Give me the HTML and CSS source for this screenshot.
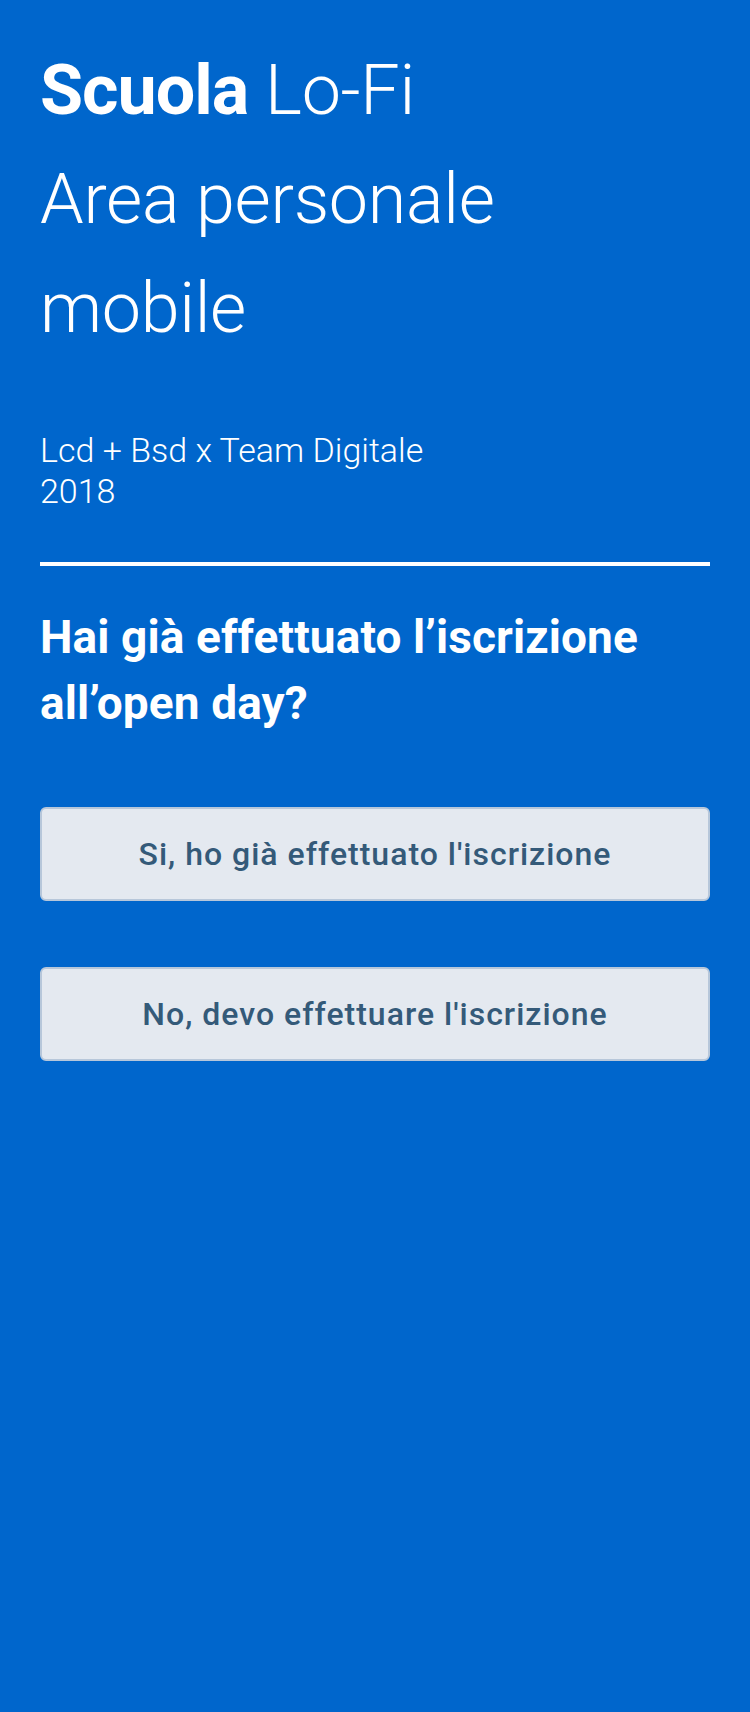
FILE: index.html
```html
<!DOCTYPE html>
<html lang="it">
<head>
<meta charset="utf-8">
<title>Scuola Lo-Fi – Area personale mobile</title>
<link rel="stylesheet" href="styles.css">
</head>
<body>
<main class="page">
  <h1 class="title"><strong class="title-strong">Scuola</strong> Lo-Fi<br>Area personale<br>mobile</h1>
  <p class="credits">Lcd + Bsd x Team Digitale<br>2018</p>
  <hr class="divider">
  <h2 class="question">Hai già effettuato l’iscrizione all’open day?</h2>
  <div class="actions">
    <button class="btn" type="button">Si, ho già effettuato l'iscrizione</button>
    <button class="btn" type="button">No, devo effettuare l'iscrizione</button>
  </div>
</main>
</body>
</html>
```

FILE: styles.css
```css
html, body {
  margin: 0;
  padding: 0;
}

body {
  background: #0066cc;
  color: #ffffff;
  font-family: Roboto, "Noto Sans", "Liberation Sans", sans-serif;
  min-height: 1712px;
}

.page {
  padding: 36px 40px 40px;
  display: flex;
  flex-direction: column;
}

.title {
  margin: 0;
  font-size: 70px;
  line-height: 109px;
  font-weight: 300;
  letter-spacing: -0.3px;
}

.title-strong {
  font-weight: 700;
  letter-spacing: -1px;
}

.credits {
  margin: 67px 0 0;
  font-size: 34px;
  line-height: 41px;
  font-weight: 300;
}

.divider {
  margin: 50px 0 0;
  border: 0;
  height: 4px;
  background: #ffffff;
}

.question {
  margin: 38px 0 0;
  font-size: 46px;
  line-height: 66px;
  font-weight: 700;
  letter-spacing: 0.1px;
  max-width: 620px;
}

.actions {
  margin-top: 71px;
  display: flex;
  flex-direction: column;
  gap: 66px;
}

.btn {
  height: 94px;
  width: 100%;
  border: 2px solid #b7c7da;
  border-radius: 6px;
  background: #e4e9f0;
  color: #345a79;
  font-family: Roboto, "Noto Sans", "Liberation Sans", sans-serif;
  font-size: 32px;
  font-weight: 500;
  letter-spacing: 1px;
  padding: 0 16px;
  cursor: pointer;
}
```
